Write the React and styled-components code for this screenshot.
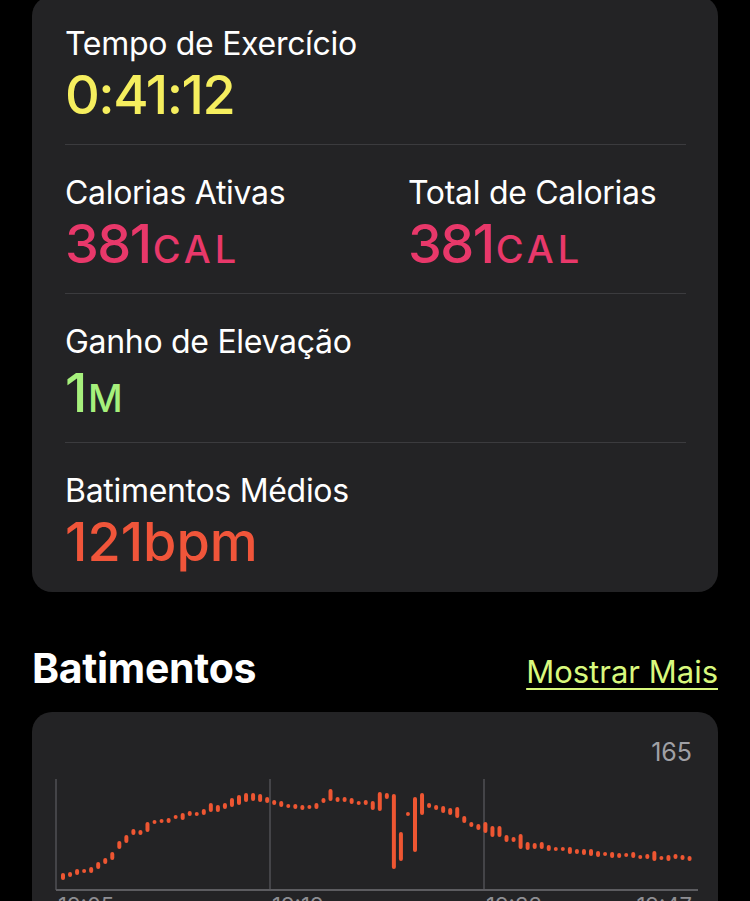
import React from 'react'
import styled, { createGlobalStyle } from 'styled-components'

const GlobalStyle = createGlobalStyle`
    body{
        margin:0;
        background:#000;
        font-family: Inter, "Noto Sans", "Liberation Sans", sans-serif;
        -webkit-font-smoothing: antialiased;
    }
`

const Page = styled.div`
    padding: 0 32px 40px;
`

const Card = styled.div`
    background:#232325;
    border-radius:20px;
    margin-top:${p => p.$offset || 0}px;
`

const StatRow = styled.div`
    margin:0 32px 0 33px;
    height:149px;
    box-sizing:border-box;
    padding-top:29px;
    display:grid;
    grid-template-columns: 343px 1fr;
    border-bottom:1px solid ${p => p.$last ? 'transparent' : '#3b3b3e'};
`

const Stat = styled.div`
    display:flex;
    flex-direction:column;
`

const Label = styled.div`
    color:#fff;
    font-size:32px;
    line-height:38px;
    letter-spacing:-0.3px;
`

const Value = styled.div`
    margin-top:5px;
    color:${p => p.$color};
    font-size:54px;
    line-height:53px;
    font-weight:500;
    letter-spacing:${p => p.$tracking ?? -1.5}px;
    white-space:nowrap;
`

const Unit = styled.span`
    font-size:38px;
    letter-spacing:${p => p.$spread ? '4px' : '0'};
    margin-left:2px;
`

const Header = styled.div`
    margin-top:52px;
    display:flex;
    align-items:baseline;
    justify-content:space-between;
`

const Title = styled.h2`
    margin:0;
    color:#fff;
    font-size:41px;
    line-height:48px;
    font-weight:700;
    letter-spacing:-0.3px;
`

const MoreLink = styled.a`
    color:#d9f87d;
    font-size:31px;
    text-decoration:underline;
    text-decoration-thickness:2px;
    text-underline-offset:5px;
    cursor:pointer;
`

const ChartCard = styled.div`
    margin-top:20px;
    background:#232325;
    border-radius:20px;
    padding:25px 20px 0;
`

const MaxLabel = styled.div`
    text-align:right;
    padding-right:6px;
    color:#a0a0a5;
    font-size:25px;
    line-height:30px;
`

const Chart = styled.svg`
    display:block;
`

const COLORS = {
    yellow: '#f5ee5e',
    pink: '#e8386a',
    green: '#a6f07c',
    orange: '#f0553a',
}

// top/bottom of each heart-rate bar in page pixels
const bars = [
    [873,880],[872,877],[869,875],[869,873],[867,873],[862,869],[858,864],[852,860],[841,849],[835,843],
    [829,835],[830,835],[822,832],[820,824],[819,823],[818,823],[815,819],[813,820],[811,816],[812,815],
    [809,815],[803,812],[805,812],[803,809],[798,807],[795,805],[793,802],[793,801],[794,802],[797,803],
    [800,805],[801,807],[804,807],[804,809],[805,810],[805,809],[803,809],[798,803],[789,801],[797,802],
    [797,802],[798,804],[801,805],[800,805],[801,810],[792,811],[793,799],[794,869],[832,861],[812,815],
    [797,852],[793,815],[803,808],[805,810],[806,813],[808,815],[807,818],[816,823],[822,827],[824,830],
    [822,833],[826,837],[826,837],[835,842],[837,842],[834,849],[842,850],[843,849],[842,849],[845,851],
    [847,851],[847,851],[847,854],[849,854],[849,855],[849,856],[851,857],[852,856],[852,858],[853,858],
    [853,857],[852,858],[855,859],[854,859],[851,861],[856,860],[855,861],[854,859],[855,860],[856,861],
]

const ORIGIN_X = 52
const ORIGIN_Y = 767

function HeartChart() {
    const grid = [4, 218, 432]
    const times = ['19:05', '19:19', '19:33']
    return (
        <Chart width="646" height="160" viewBox="0 0 646 160">
            {grid.map(x => (
                <line key={x} x1={x} y1={12} x2={x} y2={123} stroke="#515155" strokeWidth="1.5" />
            ))}
            <line x1={4} y1={123} x2={646} y2={123} stroke="#5c5c60" strokeWidth="2" />
            {bars.map(([top, bottom], i) => {
                const cx = 63 + i * 7.04 - ORIGIN_X
                const h = Math.max(bottom - top, 4)
                return (
                    <rect key={i} x={cx - 2} y={top - ORIGIN_Y} width="4" height={h} rx="2" fill="#ee5632" />
                )
            })}
            {times.map((t, i) => (
                <text key={t} x={grid[i] + 2} y={146} fill="#8e8e93" fontSize="22" fontFamily="Inter, sans-serif">{t}</text>
            ))}
            <text x={640} y={146} textAnchor="end" fill="#8e8e93" fontSize="22" fontFamily="Inter, sans-serif">19:47</text>
        </Chart>
    )
}

function App() {
    return (
        <Page>
            <GlobalStyle />
            <Card $offset={-4}>
                <StatRow>
                    <Stat>
                        <Label>Tempo de Exercício</Label>
                        <Value $color={COLORS.yellow}>0:41:12</Value>
                    </Stat>
                </StatRow>
                <StatRow>
                    <Stat>
                        <Label>Calorias Ativas</Label>
                        <Value $color={COLORS.pink}>381<Unit $spread>CAL</Unit></Value>
                    </Stat>
                    <Stat>
                        <Label>Total de Calorias</Label>
                        <Value $color={COLORS.pink}>381<Unit $spread>CAL</Unit></Value>
                    </Stat>
                </StatRow>
                <StatRow>
                    <Stat>
                        <Label>Ganho de Elevação</Label>
                        <Value $color={COLORS.green}>1<Unit>M</Unit></Value>
                    </Stat>
                </StatRow>
                <StatRow $last>
                    <Stat>
                        <Label>Batimentos Médios</Label>
                        <Value $color={COLORS.orange} $tracking={0}>121bpm</Value>
                    </Stat>
                </StatRow>
            </Card>

            <Header>
                <Title>Batimentos</Title>
                <MoreLink>Mostrar Mais</MoreLink>
            </Header>

            <ChartCard>
                <MaxLabel>165</MaxLabel>
                <HeartChart />
            </ChartCard>
        </Page>
    )
}

export default App
